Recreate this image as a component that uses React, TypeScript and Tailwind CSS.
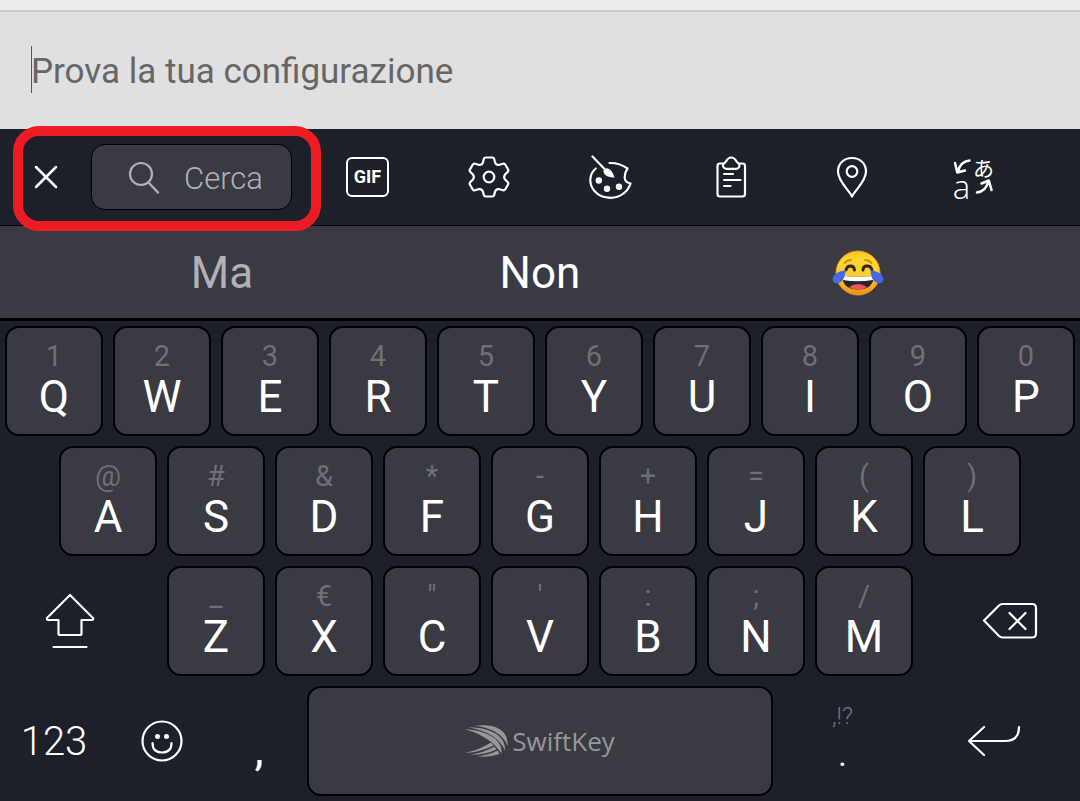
import type { ReactNode } from 'react';

type IconProps = { w: string; box: string; children: ReactNode; stroke?: number };

function Icon({ w, box, children, stroke = 2.2 }: IconProps) {
  return (
    <svg
      className={`${w} shrink-0`}
      viewBox={box}
      fill="none"
      stroke="currentColor"
      strokeWidth={stroke}
      strokeLinecap="round"
      strokeLinejoin="round"
      aria-hidden="true"
    >
      {children}
    </svg>
  );
}

function GifIcon() {
  return (
    <span className="flex h-10 w-[43px] items-center justify-center rounded-md border-2 border-white text-[18px] leading-none font-bold">
      GIF
    </span>
  );
}

function GearIcon() {
  return (
    <Icon w="w-11" box="0 0 44 44">
      <path d="M16.800 4Q17.200 2.500 18.800 2.500h6.400Q26.800 2.500 27.200 4L28 7.200Q29 10.500 32.500 9.800L36 8.800Q37.500 8.400 38.300 9.700L41 14.300Q41.800 15.600 40.800 16.700L38.300 19.200Q36 22 38.300 24.800L40.800 27.300Q41.800 28.400 41 29.700L38.300 34.300Q37.500 35.600 36 35.200L32.500 34.200Q29 33.500 28 36.800L27.200 40Q26.800 41.500 25.200 41.500h-6.400Q17.200 41.500 16.800 40L16 36.800Q15 33.500 11.500 34.200L8 35.200Q6.500 35.600 5.700 34.300L3 29.700Q2.200 28.400 3.200 27.300L5.700 24.800Q8 22 5.700 19.200L3.200 16.700Q2.200 15.600 3 14.300L5.700 9.700Q6.500 8.400 8 8.800L11.500 9.800Q15 10.500 16 7.200Z" />
      <circle cx="22" cy="22" r="5.300" />
    </Icon>
  );
}

function PaletteIcon() {
  return (
    <Icon w="w-11" box="0 0 44 44">
      <path d="M7.800 13.500C1 19 .5 29 6.500 36C13.500 44 27 45 35.500 38.500C39 36 41.500 31.500 42.500 28.500C38.500 27.500 36.500 25.500 36.700 22C36.900 18.500 38 15.500 39.500 13.500C34 9.500 28 7.800 21.500 8" />
      <path d="M4.500 1.500L16 13.500" />
      <path d="M15.500 15C19 10.500 24.500 15 26.500 22.500C20 22.500 14.800 20 15.500 15Z" fill="currentColor" stroke="none" />
      <circle cx="10.800" cy="25.500" r="3.200" fill="currentColor" stroke="none" />
      <circle cx="19" cy="33.800" r="3.200" fill="currentColor" stroke="none" />
      <circle cx="31" cy="31.800" r="3.200" fill="currentColor" stroke="none" />
    </Icon>
  );
}

function ClipboardIcon() {
  return (
    <Icon w="w-8" box="0 0 32 42">
      <path d="M8 7.500H5Q2.500 7.500 2.500 10v28Q2.500 40.500 5 40.500h22.500Q30 40.500 30 38V10Q30 7.500 27.500 7.500h-3" />
      <path d="M11 5.500Q13 1.500 16.200 1.500T21.500 5.500L24 8Q25.200 9.500 24.200 11Q23.200 12.800 21 12.800h-9.500Q9.300 12.800 8.300 11Q7.300 9.500 8.500 8Z" />
      <path d="M9 18h9M9 24h16.500M9 30h6.500" />
    </Icon>
  );
}

function PinIcon() {
  return (
    <Icon w="w-8" box="0 0 32 42">
      <path d="M16 40.500C13 34 2 25.500 2 15.500C2 7.500 8 2 16 2s14 5.500 14 13.500C30 25.500 19 34 16 40.500Z" />
      <circle cx="16" cy="15.500" r="5.300" />
    </Icon>
  );
}

function TranslateIcon() {
  return (
    <span className="grid w-11 grid-cols-2 items-center justify-items-center">
      <Icon w="w-[18px]" box="0 0 18 18" stroke={2.5}>
        <path d="M16.500 2.500Q7 3.500 5 14M2 5l2.300 9.500L12 12.500" />
      </Icon>
      <span className="text-[21px] leading-[20px] font-['Noto_Sans_CJK_JP',sans-serif]">あ</span>
      <span className="font-['Open_Sans',sans-serif] text-[33px] leading-[20px] font-light">a</span>
      <Icon w="w-[18px]" box="0 0 18 18" stroke={2.5}>
        <path d="M2 14.500Q11 13.500 13.500 3M6.500 5.500L13.800 2.500L16.500 12" />
      </Icon>
    </span>
  );
}

function JoyEmoji() {
  return (
    <svg className="w-[52px]" viewBox="0 0 52 46" role="img" aria-label="Faccina con lacrime di gioia">
      <defs>
        <linearGradient id="joy" x1="0" y1="0" x2="0" y2="1">
          <stop offset="0" stopColor="#fbc21f" />
          <stop offset="0.200" stopColor="#fdd82f" />
          <stop offset="0.600" stopColor="#fccb2c" />
          <stop offset="1" stopColor="#ee8c16" />
        </linearGradient>
      </defs>
      <circle cx="26" cy="23" r="22" fill="url(#joy)" stroke="#f0981c" />
      <path d="M12.500 13q2.500-3 6.500-3M33 10q4 0 6.500 3" stroke="#d98a10" strokeWidth="2" fill="none" strokeLinecap="round" />
      <path d="M14 20q1-4 4.500-4t4 4M31 20q0-4 4-4t5 4" stroke="#33271d" strokeWidth="3" fill="none" strokeLinecap="round" />
      <path d="M10 26q16 1.500 32 0Q41 39.500 26 39.500T10 26Z" fill="#25252b" />
      <path d="M10.500 26q15.500 1.500 31 0l-.6 4q-15 2.500-30 0Z" fill="#fff" />
      <path d="M17 37q9-6 18 0q-4 2.500-9 2.500t-9-2.500Z" fill="#f0575c" />
      <path d="M13.500 20.500C7 21 1.500 24 .6 28.500C0 32 3 34 6.500 33C11.500 31.500 13 26.500 13.500 20.500Z" fill="#4568e5" />
      <path d="M38.500 20.500C45 21 50.500 24 51.400 28.500C52 32 49 34 45.500 33C40.500 31.500 39 26.500 38.500 20.500Z" fill="#4568e5" />
    </svg>
  );
}

function SwiftKeyLogo() {
  return (
    <span className="flex items-center gap-1 text-[#97979a]">
      <svg className="w-[43px]" viewBox="0 0 43 32" fill="currentColor" aria-hidden="true">
        <path d="M9.500 .8C27 -1.500 44 3 42.500 21C39 11 29 3 9.500 .8Z" />
        <path d="M3 2.600C22 1.500 41.500 10 40 25.500C35 14 23 5.500 3 2.600Z" />
        <path d="M0 4.300C20 5 38.500 14 36.500 28.500C30 19 20 10 0 4.300Z" />
        <path d="M26 17.500L28.500 20.500Q16 27 0 28Q15 24.500 26 17.500Z" />
        <path d="M29.500 21.500L31.500 24.500Q20 30 5 29.800Q19 27.500 29.500 21.500Z" />
        <path d="M32.500 25.500L34.500 29Q24 32.800 12 31.300Q24 30 32.500 25.500Z" />
      </svg>
      <span className="font-['Open_Sans',sans-serif] text-[26px] leading-8">SwiftKey</span>
    </span>
  );
}

function Key({ hint, letter }: { hint: string; letter: string }) {
  return (
    <div className="col-span-2 px-[5px]">
      <button
        type="button"
        className="flex h-[110px] w-full flex-col items-center rounded-[14px] border-2 border-black bg-[#3a3a42] pt-[11px]"
      >
        <span className="text-[29px] leading-[34px] text-[#6f6f76]">{hint}</span>
        <span className="text-[44px] leading-[48px] text-white">{letter}</span>
      </button>
    </div>
  );
}

const topRow = [['1', 'Q'], ['2', 'W'], ['3', 'E'], ['4', 'R'], ['5', 'T'], ['6', 'Y'], ['7', 'U'], ['8', 'I'], ['9', 'O'], ['0', 'P']];
const homeRow = [['@', 'A'], ['#', 'S'], ['&', 'D'], ['*', 'F'], ['-', 'G'], ['+', 'H'], ['=', 'J'], ['(', 'K'], [')', 'L']];
const lowerRow = [['_', 'Z'], ['€', 'X'], ['"', 'C'], ["'", 'V'], [':', 'B'], [';', 'N'], ['/', 'M']];

const tools = [
  { label: 'GIF', icon: <GifIcon /> },
  { label: 'Impostazioni', icon: <GearIcon /> },
  { label: 'Temi', icon: <PaletteIcon /> },
  { label: 'Appunti', icon: <ClipboardIcon /> },
  { label: 'Posizione', icon: <PinIcon /> },
  { label: 'Traduttore', icon: <TranslateIcon /> },
];

export default function App() {
  return (
    <main className="bg-[#1d1f29] font-[Roboto,sans-serif] text-white">
      <div className="h-3 border-b-2 border-[#cbcbcb] bg-[#ececec]" />
      <div className="relative bg-[#e0e0e0]">
        <input
          type="text"
          aria-label="Prova la tua configurazione"
          placeholder="Prova la tua configurazione"
          className="block h-[117px] w-full bg-transparent px-[31px] pt-[2px] text-[35px] text-[#666] outline-none placeholder:text-[#666]"
        />
        <span className="absolute top-[34px] left-[31px] h-[47px] w-px bg-[#555]" />
      </div>

      <div className="grid h-[97px] grid-cols-[308fr_repeat(6,121fr)_46fr] border-b border-black">
        <div className="relative flex items-center pr-4">
          <button type="button" aria-label="Chiudi" className="flex h-full w-[91px] items-center justify-center">
            <Icon w="w-6" box="0 0 24 24" stroke={2.5}>
              <path d="M2 2l20 20M22 2L2 22" />
            </Icon>
          </button>
          <button
            type="button"
            className="flex h-[66px] flex-1 items-center justify-center gap-6 rounded-[14px] border border-black bg-[#3a3a42] pt-[2px] pl-2 text-[#b0b1b8]"
          >
            <Icon w="w-8" box="0 0 32 34">
              <circle cx="13" cy="13" r="11" />
              <path d="M20.500 21.500L30 31.500" strokeWidth="2.500" />
            </Icon>
            <span className="text-[31px] leading-none font-light">Cerca</span>
          </button>
          <div className="pointer-events-none absolute -top-[3px] -right-[13px] -bottom-[6px] left-[13px] z-10 rounded-[26px] border-[10px] border-[#ec1c24]" />
        </div>
        {tools.map((tool) => (
          <button key={tool.label} type="button" aria-label={tool.label} className="flex items-center justify-center pr-[2px]">
            {tool.icon}
          </button>
        ))}
      </div>

      <div className="grid h-[95px] grid-cols-[382fr_316fr_382fr] border-b-[3px] border-black bg-[#3a3a42] pt-[2px] text-[44px]">
        <button type="button" className="pl-[62px] text-[#b0b1b8]">Ma</button>
        <button type="button">Non</button>
        <button type="button" className="flex items-center justify-center pr-[62px]">
          <JoyEmoji />
        </button>
      </div>

      <div className="flex flex-col gap-[10px] py-[5px]">
        <div className="grid grid-cols-20">
          {topRow.map(([hint, letter]) => (
            <Key key={letter} hint={hint} letter={letter} />
          ))}
        </div>
        <div className="grid grid-cols-20">
          <span />
          {homeRow.map(([hint, letter]) => (
            <Key key={letter} hint={hint} letter={letter} />
          ))}
        </div>
        <div className="grid grid-cols-20">
          <button type="button" aria-label="Maiuscole" className="col-span-3 flex items-center justify-center pr-[22px]">
            <Icon w="w-[50px]" box="0 0 50 56">
              <path d="M25 2L48 25Q48.500 27 47 27H36.500V40.500Q36.500 42 35 42H15Q13.500 42 13.500 40.500V27H3Q1.500 27 2 25Z" />
              <path d="M8.500 54h33" />
            </Icon>
          </button>
          {lowerRow.map(([hint, letter]) => (
            <Key key={letter} hint={hint} letter={letter} />
          ))}
          <button type="button" aria-label="Cancella" className="col-span-3 flex items-center justify-center pl-[22px]">
            <Icon w="w-14" box="0 0 56 38">
              <path d="M2 18.500L17 3.500Q18.500 2 20.500 2H50Q54 2 54 6V31.500Q54 35.500 50 35.500H20.500Q18.500 35.500 17 34Z" />
              <path d="M27.500 11L43.500 27M43.500 11L27.500 27" />
            </Icon>
          </button>
        </div>
        <div className="grid h-[110px] grid-cols-[108fr_108fr_86fr_476fr_129fr_173fr]">
          <button type="button" className="pt-[2px] text-[40px] font-light">123</button>
          <button type="button" aria-label="Emoji" className="flex items-center justify-center">
            <Icon w="w-[42px]" box="0 0 42 42">
              <circle cx="21" cy="21" r="19.500" />
              <path d="M11.500 23q0 9.500 9.500 9.500t9.500-9.500" />
              <circle cx="16.500" cy="16.500" r="2.500" fill="currentColor" stroke="none" />
              <circle cx="25.500" cy="16.500" r="2.500" fill="currentColor" stroke="none" />
            </Icon>
          </button>
          <button type="button" className="pt-4 text-[46px]">,</button>
          <div className="px-[5px]">
            <button
              type="button"
              className="flex h-[110px] w-full items-center justify-center rounded-[14px] border-2 border-black bg-[#3a3a42]"
            >
              <SwiftKeyLogo />
            </button>
          </div>
          <button type="button" className="flex flex-col items-center pt-4">
            <span className="text-[24px] leading-7 font-light text-[#77787e]">,!?</span>
            <span className="text-[32px] leading-[50px]">.</span>
          </button>
          <button type="button" aria-label="Invio" className="flex items-center justify-center">
            <Icon w="w-[54px]" box="0 0 54 32">
              <path d="M17 2L2 16L17 30M2 16H38Q52 16 52 2" />
            </Icon>
          </button>
        </div>
      </div>
    </main>
  );
}
